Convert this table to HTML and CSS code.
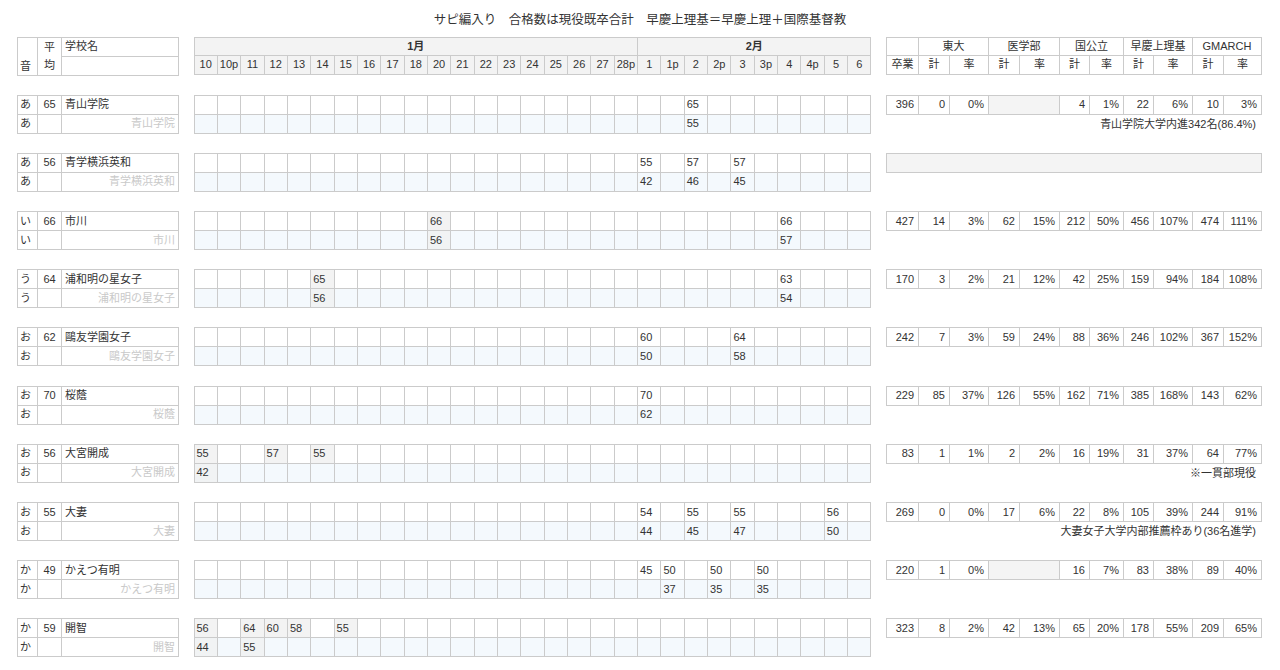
FILE: index.html
```html
<!DOCTYPE html>
<html lang="ja">
<head>
<meta charset="utf-8">
<title>サピ編入り</title>
<link rel="stylesheet" href="styles.css">
</head>
<body>
<div class="title">サピ編入り　合格数は現役既卒合計　早慶上理基＝早慶上理＋国際基督教</div>
<div class="sheet">

<!-- header -->
<table class="names head">
<colgroup><col class="w20"><col class="w24"><col class="w117"></colgroup>
<tr><td rowspan="2" class="kana-h">音</td><td rowspan="2" class="avg-h">平<br>均</td><td>学校名</td></tr>
<tr><td></td></tr>
</table>
<table class="grid head">
<colgroup><col span="29" class="day"></colgroup>
<tr class="month"><td colspan="19">1月</td><td colspan="10">2月</td></tr>
<tr class="days"><td>10</td><td>10p</td><td>11</td><td>12</td><td>13</td><td>14</td><td>15</td><td>16</td><td>17</td><td>18</td><td>20</td><td>21</td><td>22</td><td>23</td><td>24</td><td>25</td><td>26</td><td>27</td><td>28p</td><td>1</td><td>1p</td><td>2</td><td>2p</td><td>3</td><td>3p</td><td>4</td><td>4p</td><td>5</td><td>6</td></tr>
</table>
<table class="res head">
<colgroup><col class="w32"><col class="w31"><col class="w39"><col class="w31"><col class="w40"><col class="w30"><col class="w34"><col class="w30"><col class="w39"><col class="w31"><col class="w38"></colgroup>
<tr><td></td><td colspan="2">東大</td><td colspan="2">医学部</td><td colspan="2">国公立</td><td colspan="2">早慶上理基</td><td colspan="2">GMARCH</td></tr>
<tr><td>卒業</td><td>計</td><td>率</td><td>計</td><td>率</td><td>計</td><td>率</td><td>計</td><td>率</td><td>計</td><td>率</td></tr>
</table>

<!-- 青山学院 -->
<table class="names">
<colgroup><col class="w20"><col class="w24"><col class="w117"></colgroup>
<tr><td>あ</td><td class="avg">65</td><td>青山学院</td></tr>
<tr><td>あ</td><td></td><td class="alias">青山学院</td></tr>
</table>
<table class="grid">
<colgroup><col span="29" class="day"></colgroup>
<tr><td></td><td></td><td></td><td></td><td></td><td></td><td></td><td></td><td></td><td></td><td></td><td></td><td></td><td></td><td></td><td></td><td></td><td></td><td></td><td></td><td></td><td>65</td><td></td><td></td><td></td><td></td><td></td><td></td><td></td></tr>
<tr><td></td><td></td><td></td><td></td><td></td><td></td><td></td><td></td><td></td><td></td><td></td><td></td><td></td><td></td><td></td><td></td><td></td><td></td><td></td><td></td><td></td><td>55</td><td></td><td></td><td></td><td></td><td></td><td></td><td></td></tr>
</table>
<div class="stats">
<table class="res">
<colgroup><col class="w32"><col class="w31"><col class="w39"><col class="w31"><col class="w40"><col class="w30"><col class="w34"><col class="w30"><col class="w39"><col class="w31"><col class="w38"></colgroup>
<tr><td>396</td><td>0</td><td>0%</td><td colspan="2" class="na"></td><td>4</td><td>1%</td><td>22</td><td>6%</td><td>10</td><td>3%</td></tr>
</table>
<p class="note">青山学院大学内進342名(86.4%)</p>
</div>

<!-- 青学横浜英和 -->
<table class="names">
<colgroup><col class="w20"><col class="w24"><col class="w117"></colgroup>
<tr><td>あ</td><td class="avg">56</td><td>青学横浜英和</td></tr>
<tr><td>あ</td><td></td><td class="alias">青学横浜英和</td></tr>
</table>
<table class="grid">
<colgroup><col span="29" class="day"></colgroup>
<tr><td></td><td></td><td></td><td></td><td></td><td></td><td></td><td></td><td></td><td></td><td></td><td></td><td></td><td></td><td></td><td></td><td></td><td></td><td></td><td>55</td><td></td><td>57</td><td></td><td>57</td><td></td><td></td><td></td><td></td><td></td></tr>
<tr><td></td><td></td><td></td><td></td><td></td><td></td><td></td><td></td><td></td><td></td><td></td><td></td><td></td><td></td><td></td><td></td><td></td><td></td><td></td><td>42</td><td></td><td>46</td><td></td><td>45</td><td></td><td></td><td></td><td></td><td></td></tr>
</table>
<div class="stats">
<table class="res">
<colgroup><col class="w32"><col class="w31"><col class="w39"><col class="w31"><col class="w40"><col class="w30"><col class="w34"><col class="w30"><col class="w39"><col class="w31"><col class="w38"></colgroup>
<tr><td colspan="11" class="na"></td></tr>
</table>
</div>

<!-- 市川 -->
<table class="names">
<colgroup><col class="w20"><col class="w24"><col class="w117"></colgroup>
<tr><td>い</td><td class="avg">66</td><td>市川</td></tr>
<tr><td>い</td><td></td><td class="alias">市川</td></tr>
</table>
<table class="grid">
<colgroup><col span="29" class="day"></colgroup>
<tr><td></td><td></td><td></td><td></td><td></td><td></td><td></td><td></td><td></td><td></td><td class="jan">66</td><td></td><td></td><td></td><td></td><td></td><td></td><td></td><td></td><td></td><td></td><td></td><td></td><td></td><td></td><td>66</td><td></td><td></td><td></td></tr>
<tr><td></td><td></td><td></td><td></td><td></td><td></td><td></td><td></td><td></td><td></td><td class="jan">56</td><td></td><td></td><td></td><td></td><td></td><td></td><td></td><td></td><td></td><td></td><td></td><td></td><td></td><td></td><td>57</td><td></td><td></td><td></td></tr>
</table>
<div class="stats">
<table class="res">
<colgroup><col class="w32"><col class="w31"><col class="w39"><col class="w31"><col class="w40"><col class="w30"><col class="w34"><col class="w30"><col class="w39"><col class="w31"><col class="w38"></colgroup>
<tr><td>427</td><td>14</td><td>3%</td><td>62</td><td>15%</td><td>212</td><td>50%</td><td>456</td><td>107%</td><td>474</td><td>111%</td></tr>
</table>
</div>

<!-- 浦和明の星女子 -->
<table class="names">
<colgroup><col class="w20"><col class="w24"><col class="w117"></colgroup>
<tr><td>う</td><td class="avg">64</td><td>浦和明の星女子</td></tr>
<tr><td>う</td><td></td><td class="alias">浦和明の星女子</td></tr>
</table>
<table class="grid">
<colgroup><col span="29" class="day"></colgroup>
<tr><td></td><td></td><td></td><td></td><td></td><td class="jan">65</td><td></td><td></td><td></td><td></td><td></td><td></td><td></td><td></td><td></td><td></td><td></td><td></td><td></td><td></td><td></td><td></td><td></td><td></td><td></td><td>63</td><td></td><td></td><td></td></tr>
<tr><td></td><td></td><td></td><td></td><td></td><td class="jan">56</td><td></td><td></td><td></td><td></td><td></td><td></td><td></td><td></td><td></td><td></td><td></td><td></td><td></td><td></td><td></td><td></td><td></td><td></td><td></td><td>54</td><td></td><td></td><td></td></tr>
</table>
<div class="stats">
<table class="res">
<colgroup><col class="w32"><col class="w31"><col class="w39"><col class="w31"><col class="w40"><col class="w30"><col class="w34"><col class="w30"><col class="w39"><col class="w31"><col class="w38"></colgroup>
<tr><td>170</td><td>3</td><td>2%</td><td>21</td><td>12%</td><td>42</td><td>25%</td><td>159</td><td>94%</td><td>184</td><td>108%</td></tr>
</table>
</div>

<!-- 鷗友学園女子 -->
<table class="names">
<colgroup><col class="w20"><col class="w24"><col class="w117"></colgroup>
<tr><td>お</td><td class="avg">62</td><td>鷗友学園女子</td></tr>
<tr><td>お</td><td></td><td class="alias">鷗友学園女子</td></tr>
</table>
<table class="grid">
<colgroup><col span="29" class="day"></colgroup>
<tr><td></td><td></td><td></td><td></td><td></td><td></td><td></td><td></td><td></td><td></td><td></td><td></td><td></td><td></td><td></td><td></td><td></td><td></td><td></td><td>60</td><td></td><td></td><td></td><td>64</td><td></td><td></td><td></td><td></td><td></td></tr>
<tr><td></td><td></td><td></td><td></td><td></td><td></td><td></td><td></td><td></td><td></td><td></td><td></td><td></td><td></td><td></td><td></td><td></td><td></td><td></td><td>50</td><td></td><td></td><td></td><td>58</td><td></td><td></td><td></td><td></td><td></td></tr>
</table>
<div class="stats">
<table class="res">
<colgroup><col class="w32"><col class="w31"><col class="w39"><col class="w31"><col class="w40"><col class="w30"><col class="w34"><col class="w30"><col class="w39"><col class="w31"><col class="w38"></colgroup>
<tr><td>242</td><td>7</td><td>3%</td><td>59</td><td>24%</td><td>88</td><td>36%</td><td>246</td><td>102%</td><td>367</td><td>152%</td></tr>
</table>
</div>

<!-- 桜蔭 -->
<table class="names">
<colgroup><col class="w20"><col class="w24"><col class="w117"></colgroup>
<tr><td>お</td><td class="avg">70</td><td>桜蔭</td></tr>
<tr><td>お</td><td></td><td class="alias">桜蔭</td></tr>
</table>
<table class="grid">
<colgroup><col span="29" class="day"></colgroup>
<tr><td></td><td></td><td></td><td></td><td></td><td></td><td></td><td></td><td></td><td></td><td></td><td></td><td></td><td></td><td></td><td></td><td></td><td></td><td></td><td>70</td><td></td><td></td><td></td><td></td><td></td><td></td><td></td><td></td><td></td></tr>
<tr><td></td><td></td><td></td><td></td><td></td><td></td><td></td><td></td><td></td><td></td><td></td><td></td><td></td><td></td><td></td><td></td><td></td><td></td><td></td><td>62</td><td></td><td></td><td></td><td></td><td></td><td></td><td></td><td></td><td></td></tr>
</table>
<div class="stats">
<table class="res">
<colgroup><col class="w32"><col class="w31"><col class="w39"><col class="w31"><col class="w40"><col class="w30"><col class="w34"><col class="w30"><col class="w39"><col class="w31"><col class="w38"></colgroup>
<tr><td>229</td><td>85</td><td>37%</td><td>126</td><td>55%</td><td>162</td><td>71%</td><td>385</td><td>168%</td><td>143</td><td>62%</td></tr>
</table>
</div>

<!-- 大宮開成 -->
<table class="names">
<colgroup><col class="w20"><col class="w24"><col class="w117"></colgroup>
<tr><td>お</td><td class="avg">56</td><td>大宮開成</td></tr>
<tr><td>お</td><td></td><td class="alias">大宮開成</td></tr>
</table>
<table class="grid">
<colgroup><col span="29" class="day"></colgroup>
<tr><td class="jan">55</td><td></td><td></td><td class="jan">57</td><td></td><td class="jan">55</td><td></td><td></td><td></td><td></td><td></td><td></td><td></td><td></td><td></td><td></td><td></td><td></td><td></td><td></td><td></td><td></td><td></td><td></td><td></td><td></td><td></td><td></td><td></td></tr>
<tr><td class="jan">42</td><td></td><td></td><td></td><td></td><td></td><td></td><td></td><td></td><td></td><td></td><td></td><td></td><td></td><td></td><td></td><td></td><td></td><td></td><td></td><td></td><td></td><td></td><td></td><td></td><td></td><td></td><td></td><td></td></tr>
</table>
<div class="stats">
<table class="res">
<colgroup><col class="w32"><col class="w31"><col class="w39"><col class="w31"><col class="w40"><col class="w30"><col class="w34"><col class="w30"><col class="w39"><col class="w31"><col class="w38"></colgroup>
<tr><td>83</td><td>1</td><td>1%</td><td>2</td><td>2%</td><td>16</td><td>19%</td><td>31</td><td>37%</td><td>64</td><td>77%</td></tr>
</table>
<p class="note">※一貫部現役</p>
</div>

<!-- 大妻 -->
<table class="names">
<colgroup><col class="w20"><col class="w24"><col class="w117"></colgroup>
<tr><td>お</td><td class="avg">55</td><td>大妻</td></tr>
<tr><td>お</td><td></td><td class="alias">大妻</td></tr>
</table>
<table class="grid">
<colgroup><col span="29" class="day"></colgroup>
<tr><td></td><td></td><td></td><td></td><td></td><td></td><td></td><td></td><td></td><td></td><td></td><td></td><td></td><td></td><td></td><td></td><td></td><td></td><td></td><td>54</td><td></td><td>55</td><td></td><td>55</td><td></td><td></td><td></td><td>56</td><td></td></tr>
<tr><td></td><td></td><td></td><td></td><td></td><td></td><td></td><td></td><td></td><td></td><td></td><td></td><td></td><td></td><td></td><td></td><td></td><td></td><td></td><td>44</td><td></td><td>45</td><td></td><td>47</td><td></td><td></td><td></td><td>50</td><td></td></tr>
</table>
<div class="stats">
<table class="res">
<colgroup><col class="w32"><col class="w31"><col class="w39"><col class="w31"><col class="w40"><col class="w30"><col class="w34"><col class="w30"><col class="w39"><col class="w31"><col class="w38"></colgroup>
<tr><td>269</td><td>0</td><td>0%</td><td>17</td><td>6%</td><td>22</td><td>8%</td><td>105</td><td>39%</td><td>244</td><td>91%</td></tr>
</table>
<p class="note">大妻女子大学内部推薦枠あり(36名進学)</p>
</div>

<!-- かえつ有明 -->
<table class="names">
<colgroup><col class="w20"><col class="w24"><col class="w117"></colgroup>
<tr><td>か</td><td class="avg">49</td><td>かえつ有明</td></tr>
<tr><td>か</td><td></td><td class="alias">かえつ有明</td></tr>
</table>
<table class="grid">
<colgroup><col span="29" class="day"></colgroup>
<tr><td></td><td></td><td></td><td></td><td></td><td></td><td></td><td></td><td></td><td></td><td></td><td></td><td></td><td></td><td></td><td></td><td></td><td></td><td></td><td>45</td><td>50</td><td></td><td>50</td><td></td><td>50</td><td></td><td></td><td></td><td></td></tr>
<tr><td></td><td></td><td></td><td></td><td></td><td></td><td></td><td></td><td></td><td></td><td></td><td></td><td></td><td></td><td></td><td></td><td></td><td></td><td></td><td></td><td>37</td><td></td><td>35</td><td></td><td>35</td><td></td><td></td><td></td><td></td></tr>
</table>
<div class="stats">
<table class="res">
<colgroup><col class="w32"><col class="w31"><col class="w39"><col class="w31"><col class="w40"><col class="w30"><col class="w34"><col class="w30"><col class="w39"><col class="w31"><col class="w38"></colgroup>
<tr><td>220</td><td>1</td><td>0%</td><td colspan="2" class="na"></td><td>16</td><td>7%</td><td>83</td><td>38%</td><td>89</td><td>40%</td></tr>
</table>
</div>

<!-- 開智 -->
<table class="names">
<colgroup><col class="w20"><col class="w24"><col class="w117"></colgroup>
<tr><td>か</td><td class="avg">59</td><td>開智</td></tr>
<tr><td>か</td><td></td><td class="alias">開智</td></tr>
</table>
<table class="grid">
<colgroup><col span="29" class="day"></colgroup>
<tr><td class="jan">56</td><td></td><td class="jan">64</td><td class="jan">60</td><td class="jan">58</td><td></td><td class="jan">55</td><td></td><td></td><td></td><td></td><td></td><td></td><td></td><td></td><td></td><td></td><td></td><td></td><td></td><td></td><td></td><td></td><td></td><td></td><td></td><td></td><td></td><td></td></tr>
<tr><td class="jan">44</td><td></td><td class="jan">55</td><td></td><td></td><td></td><td></td><td></td><td></td><td></td><td></td><td></td><td></td><td></td><td></td><td></td><td></td><td></td><td></td><td></td><td></td><td></td><td></td><td></td><td></td><td></td><td></td><td></td><td></td></tr>
</table>
<div class="stats">
<table class="res">
<colgroup><col class="w32"><col class="w31"><col class="w39"><col class="w31"><col class="w40"><col class="w30"><col class="w34"><col class="w30"><col class="w39"><col class="w31"><col class="w38"></colgroup>
<tr><td>323</td><td>8</td><td>2%</td><td>42</td><td>13%</td><td>65</td><td>20%</td><td>178</td><td>55%</td><td>209</td><td>65%</td></tr>
</table>
</div>

</div>
</body>
</html>
```

FILE: styles.css
```css
* { box-sizing: border-box; }

body {
  margin: 0;
  background: #fff;
  color: #333;
  font-family: "Liberation Sans", "Noto Sans CJK JP", sans-serif;
  font-size: 11px;
}

.title {
  height: 36.5px;
  padding-top: 12px;
  line-height: 16px;
  font-size: 12.5px;
  text-align: center;
  color: #333;
}

.sheet {
  display: grid;
  grid-template-columns: 161px 677px 375px;
  column-gap: 15.5px;
  row-gap: 19.2px;
  padding-left: 17px;
  align-items: start;
}

table {
  border-collapse: collapse;
  table-layout: fixed;
}

td {
  border: 1px solid #cbcbcb;
  height: 19px;
  padding: 0 3px;
  line-height: 17px;
  white-space: nowrap;
  overflow: hidden;
  vertical-align: middle;
}

.head td { height: 18.5px; }

/* column widths */
.w20 { width: 20px; }
.w24 { width: 24px; }
.w117 { width: 117px; }
.w30 { width: 30px; }
.w31 { width: 31px; }
.w32 { width: 32px; }
.w34 { width: 34px; }
.w38 { width: 38px; }
.w39 { width: 39px; }
.w40 { width: 40px; }
.day { width: 23.345px; }

/* school name table */
.names { width: 161px; }
.names td:first-child { padding: 0 2px; }
.names .avg { text-align: center; padding: 0; }
.names .alias { text-align: right; color: #c9c9c9; }
.names .kana-h { vertical-align: bottom; }
.names .avg-h { text-align: center; padding: 0; line-height: 18.5px; }

/* exam date grid */
.grid { width: 677px; }
.grid td { padding: 0 2px; }
.grid tr + tr td { background: #f4f9fd; }
.grid td.jan { background: #f3f3f3; }
.grid tr + tr td.jan { background: #f1f3f4; }

.grid.head tr td { background: #f3f3f3; text-align: center; padding: 0; }
.grid.head .month td { font-weight: bold; }

/* results table */
.res { width: 375px; }
.res td { text-align: right; padding: 0 4px; }
.res td.na { background: #f4f4f4; }
.res.head td { text-align: center; padding: 0; }

.stats { display: flex; flex-direction: column; }

.note {
  margin: 0;
  height: 19px;
  line-height: 19px;
  text-align: right;
  padding-right: 5px;
}
```
